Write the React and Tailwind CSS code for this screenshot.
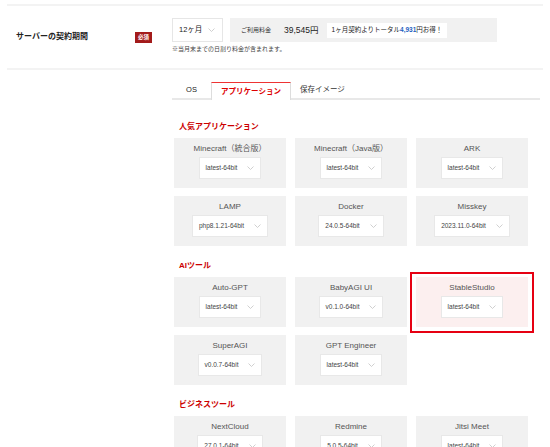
import { useState } from 'react'

const groups = [
  {
    title: '人気アプリケーション',
    items: [
      ['Minecraft（統合版）', 'latest-64bit'],
      ['Minecraft（Java版）', 'latest-64bit'],
      ['ARK', 'latest-64bit'],
      ['LAMP', 'php8.1.21-64bit'],
      ['Docker', '24.0.5-64bit'],
      ['Misskey', '2023.11.0-64bit'],
    ],
  },
  {
    title: 'AIツール',
    items: [
      ['Auto-GPT', 'latest-64bit'],
      ['BabyAGI UI', 'v0.1.0-64bit'],
      ['StableStudio', 'latest-64bit', true],
      ['SuperAGI', 'v0.0.7-64bit'],
      ['GPT Engineer', 'latest-64bit'],
    ],
  },
  {
    title: 'ビジネスツール',
    items: [
      ['NextCloud', '27.0.1-64bit'],
      ['Redmine', '5.0.5-64bit'],
      ['Jitsi Meet', 'latest-64bit'],
    ],
  },
]

function Chevron() {
  return (
    <svg width="7" height="4" viewBox="0 0 7 4" fill="none" className="shrink-0">
      <path d="M0.5 0.5 L3.5 3.5 L6.5 0.5" stroke="#c4c4c4" strokeWidth="0.8" />
    </svg>
  )
}

function AppCard({ name, version, active }) {
  return (
    <div className="relative">
      <div className={`h-[50px] flex flex-col items-center pt-[6px] ${active ? 'bg-[#fcefef]' : 'bg-[#f1f1f1]'}`}>
        <div className="text-[8px] leading-[10px] text-[#555]">{name}</div>
        <div className="mt-[3px] h-[22px] bg-white border border-[#e8e8e8] flex items-center pl-[6px] pr-[6px] gap-[10px]">
          <span className="text-[6.5px] text-[#444]">{version}</span>
          <Chevron />
        </div>
      </div>
      {/* 注目枠 */}
      {active && (
        <div className="absolute -left-[6px] -right-[6px] -top-[5px] -bottom-[6px] border-2 border-[#e60012]" />
      )}
    </div>
  )
}

function App() {
  const [tab, setTab] = useState('app')

  return (
    <div className="w-[550px] h-[447px] overflow-hidden bg-white font-['Liberation_Sans','Noto_Sans_CJK_JP',sans-serif] text-[#333]">

      {/* 契約期間 */}
      <div className="pt-[4px] px-[7px]">
        <div className="border-t-2 border-[#f3f3f3]" />
        <div className="flex h-[64px] border-b-2 border-[#f3f3f3]">
          <div className="w-[165px] flex items-center pl-[9px] pr-[20px]">
            <span className="text-[8px] font-bold text-[#222]">サーバーの契約期間</span>
            <span className="ml-auto w-[17px] h-[11px] bg-[#a31b1b] text-white text-[5.5px] font-bold flex items-center justify-center">必須</span>
          </div>
          <div className="pt-[12px]">
            <div className="flex">
              <div className="w-[51px] h-[24px] border border-[#e6e6e6] bg-white flex items-center pl-[6px] pr-[7px] justify-between">
                <span className="text-[7.5px] text-[#222]">12ヶ月</span>
                <Chevron />
              </div>
              <div className="ml-[7px] w-[267px] h-[24px] bg-[#f1f1f1] flex items-center pl-[11px]">
                <span className="text-[6px] text-[#333]">ご利用料金</span>
                <span className="ml-[13px] text-[8.5px] text-[#222]">39,545円</span>
                <span className="ml-[8px] h-[15px] bg-white flex items-center px-[5px] text-[6.5px] text-[#222]">
                  1ヶ月契約よりトータル<b className="text-[#1d5fbf]">4,931</b>円お得！
                </span>
              </div>
            </div>
            <p className="mt-[3px] text-[6px] text-[#444]">※当月末までの日割り料金が含まれます。</p>
          </div>
        </div>
      </div>

      {/* タブ */}
      <div className="ml-[172px] w-[368px] mt-[12px] flex h-[18px] border-b-2 border-[#e8e8e8]">
        <button onClick={() => setTab('os')} className="w-[39px] text-[7.5px] text-[#222]">OS</button>
        <button
          onClick={() => setTab('app')}
          className={`w-[80px] h-[18px] text-[7.5px] font-bold bg-white border-t border-x ${tab === 'app' ? 'border-t-[#e33] border-x-[#ddd] text-[#d00]' : 'border-transparent text-[#222]'}`}
        >
          アプリケーション
        </button>
        <button onClick={() => setTab('image')} className="pl-[9px] text-[7.5px] text-[#333]">保存イメージ</button>
      </div>

      {/* アプリ一覧 */}
      <div className="pl-[174px] pt-[21px]">
        {groups.map((g, gi) => (
          <div key={g.title} className={gi > 0 ? 'mt-[14px]' : ''}>
            <h3 className="pl-[5px] h-[12px] leading-[12px] text-[8px] font-bold text-[#cc0000] mb-[5px]">{g.title}</h3>
            <div className="grid grid-cols-[112px_112px_112px] gap-x-[9px] gap-y-[8px]">
              {g.items.map(([name, version, active]) => (
                <AppCard key={name} name={name} version={version} active={active} />
              ))}
            </div>
          </div>
        ))}
      </div>
    </div>
  )
}

export default App
